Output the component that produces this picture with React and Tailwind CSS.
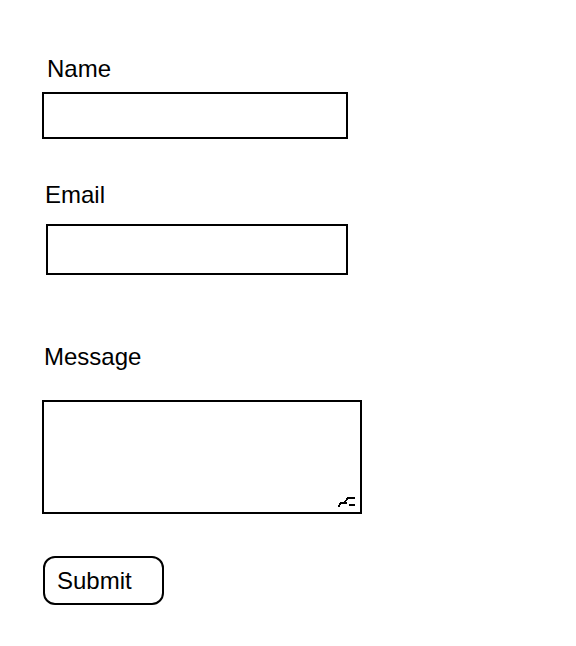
import React from "react";

// Simple contact form: three labelled fields and a submit button.
function ResizeGrip() {
  return (
    <svg
      className="pointer-events-none absolute right-[6px] bottom-[6px]"
      width="18"
      height="12"
      viewBox="0 0 18 12"
      shapeRendering="crispEdges"
      fill="none"
      stroke="#000"
      strokeWidth="2"
    >
      <polyline points="0,11 3,7 9,7" />
      <polyline points="6,7 10,2 17,2" />
      <polyline points="11,9 17,9" />
    </svg>
  );
}

export default function App() {
  return (
    <div className="min-h-screen bg-white pt-[55px] font-['Liberation_Sans',Arial,sans-serif] text-black">
      <form className="flex flex-col items-start" onSubmit={(e) => e.preventDefault()}>
        <label htmlFor="name" className="ml-[47px] text-[24px] leading-[27px]">
          Name
        </label>
        <input
          id="name"
          type="text"
          className="mt-[10px] ml-[42px] h-[47px] w-[306px] border-2 border-black bg-white outline-none"
        />

        <label htmlFor="email" className="mt-[42px] ml-[45px] text-[24px] leading-[27px]">
          Email
        </label>
        <input
          id="email"
          type="email"
          className="mt-[16px] ml-[46px] h-[51px] w-[302px] border-2 border-black bg-white outline-none"
        />

        <label htmlFor="message" className="mt-[68px] ml-[44px] text-[24px] leading-[27px]">
          Message
        </label>
        <div className="relative mt-[30px] ml-[42px] h-[114px] w-[320px]">
          <textarea
            id="message"
            className="block h-full w-full resize-none border-2 border-black bg-white outline-none"
          />
          <ResizeGrip />
        </div>

        <button
          type="submit"
          className="mt-[42px] ml-[43px] h-[49px] w-[121px] rounded-[12px] border-2 border-black bg-white pl-[12px] text-left text-[24px] leading-[27px]"
        >
          Submit
        </button>
      </form>
    </div>
  );
}
